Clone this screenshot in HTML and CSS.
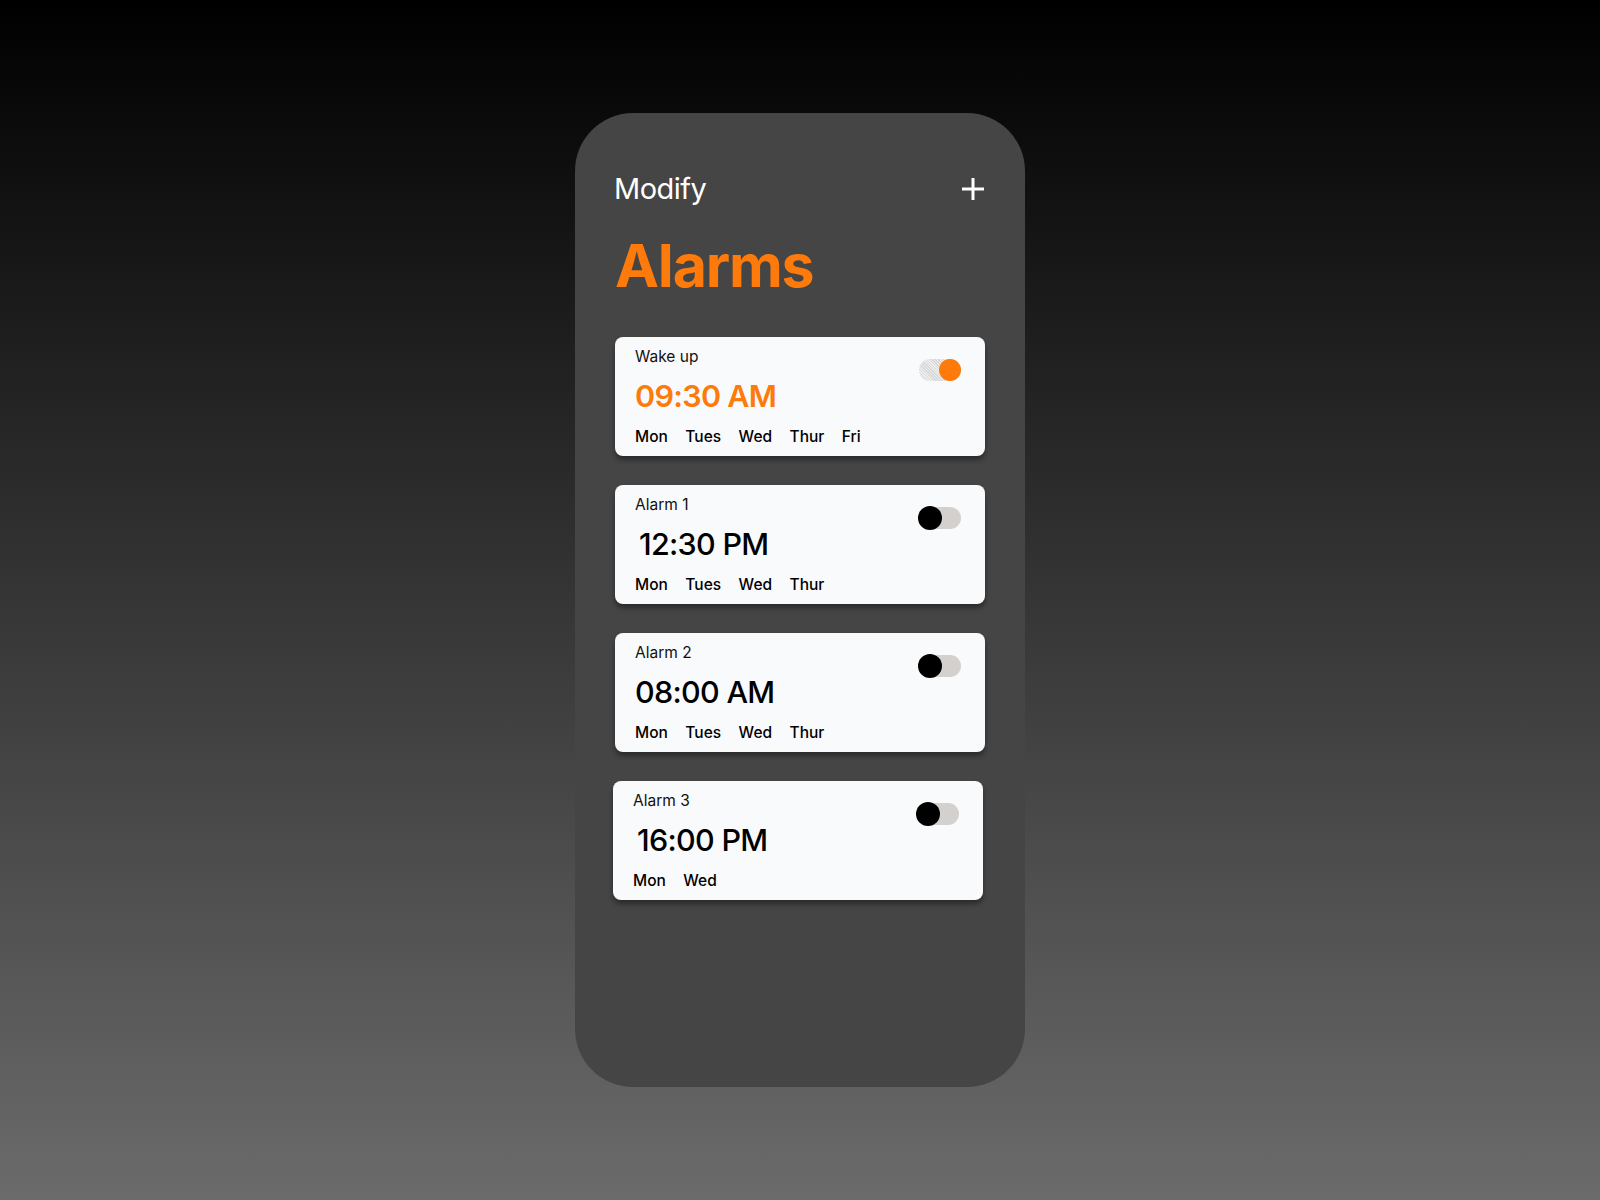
FILE: index.html
```html
<!DOCTYPE html>
<html lang="en">
<head>
<meta charset="utf-8">
<title>Alarms</title>
<link rel="stylesheet" href="styles.css">
</head>
<body>
<main class="phone">
  <header class="topbar">
    <span class="modify">Modify</span>
    <button class="add" aria-label="Add alarm">
      <svg width="24" height="24" viewBox="0 0 24 24"><path d="M12 1v22M1 12h22" stroke="#fff" stroke-width="3" stroke-linecap="butt" fill="none"/></svg>
    </button>
  </header>
  <h1 class="title">Alarms</h1>
  <section class="list">
    <article class="card">
      <div class="info">
        <div class="label">Wake up</div>
        <div class="time time--active">09:30 AM</div>
        <div class="days"><span>Mon</span><span>Tues</span><span>Wed</span><span>Thur</span><span>Fri</span></div>
      </div>
      <div class="toggle toggle--on"><span class="knob"></span></div>
    </article>
    <article class="card">
      <div class="info">
        <div class="label">Alarm 1</div>
        <div class="time time--indent">12:30 PM</div>
        <div class="days"><span>Mon</span><span>Tues</span><span>Wed</span><span>Thur</span></div>
      </div>
      <div class="toggle"><span class="knob"></span></div>
    </article>
    <article class="card">
      <div class="info">
        <div class="label">Alarm 2</div>
        <div class="time">08:00 AM</div>
        <div class="days"><span>Mon</span><span>Tues</span><span>Wed</span><span>Thur</span></div>
      </div>
      <div class="toggle"><span class="knob"></span></div>
    </article>
    <article class="card card--shift">
      <div class="info">
        <div class="label">Alarm 3</div>
        <div class="time time--indent">16:00 PM</div>
        <div class="days"><span>Mon</span><span>Wed</span></div>
      </div>
      <div class="toggle"><span class="knob"></span></div>
    </article>
  </section>
</main>
</body>
</html>
```

FILE: styles.css
```css
* { box-sizing: border-box; }

html, body {
  margin: 0;
  padding: 0;
}

body {
  width: 1600px;
  height: 1200px;
  background: linear-gradient(180deg, #000000 0%, #6b6b6b 100%);
  font-family: Inter, "Noto Sans", "Liberation Sans", sans-serif;
  overflow: hidden;
  padding-top: 113px;
}

.phone {
  width: 450px;
  height: 974px;
  margin: 0 auto;
  background: #454545;
  border-radius: 58px;
  padding: 60px 40px 0 40px;
}

.topbar {
  display: flex;
  align-items: center;
  justify-content: space-between;
  height: 32px;
}

.modify {
  color: #ffffff;
  font-size: 29px;
  line-height: 32px;
  font-weight: 400;
  letter-spacing: -0.5px;
  margin-left: -1px;
}

.add {
  width: 24px;
  height: 24px;
  padding: 0;
  margin: 0;
  border: 0;
  background: none;
  display: block;
}
.add svg { display: block; }

.title {
  margin: 31px 0 0 0;
  color: #fd7a0b;
  font-size: 59px;
  line-height: 60px;
  font-weight: 700;
  letter-spacing: -1.2px;
}

.list {
  display: flex;
  flex-direction: column;
  gap: 29px;
  margin-top: 41px;
}

.card {
  display: flex;
  justify-content: space-between;
  align-items: flex-start;
  height: 119px;
  background: #f9fafb;
  border-radius: 8px;
  padding: 11px 24px 0 20px;
  box-shadow: 0 4px 5px rgba(0, 0, 0, 0.38);
}

.card--shift {
  margin: 0 2px 0 -2px;
}

.label {
  font-size: 15.5px;
  line-height: 18px;
  font-weight: 400;
  color: #111;
}

.time {
  margin-top: 12px;
  font-size: 30.5px;
  line-height: 36px;
  font-weight: 500;
  color: #000;
  letter-spacing: -0.7px;
}

.time--active {
  color: #fd7a0b;
  font-weight: 600;
}

.time--indent {
  padding-left: 4px;
}

.days {
  display: flex;
  gap: 17.5px;
  margin-top: 13px;
  font-size: 15.5px;
  line-height: 20px;
  font-weight: 500;
  color: #000;
}

.toggle {
  position: relative;
  width: 42px;
  height: 22px;
  margin-top: 11px;
  border-radius: 11px;
  background: #d4d0ce;
}

.toggle .knob {
  position: absolute;
  left: -1px;
  top: -1px;
  width: 24px;
  height: 24px;
  border-radius: 50%;
  background: #000;
}

.toggle--on {
  background: repeating-linear-gradient(45deg, #d8d8d8 0 1px, #eeeeee 1px 2px);
}

.toggle--on .knob {
  left: auto;
  right: 0;
  top: 0;
  width: 22px;
  height: 22px;
  background: #fd7a0b;
}
```
